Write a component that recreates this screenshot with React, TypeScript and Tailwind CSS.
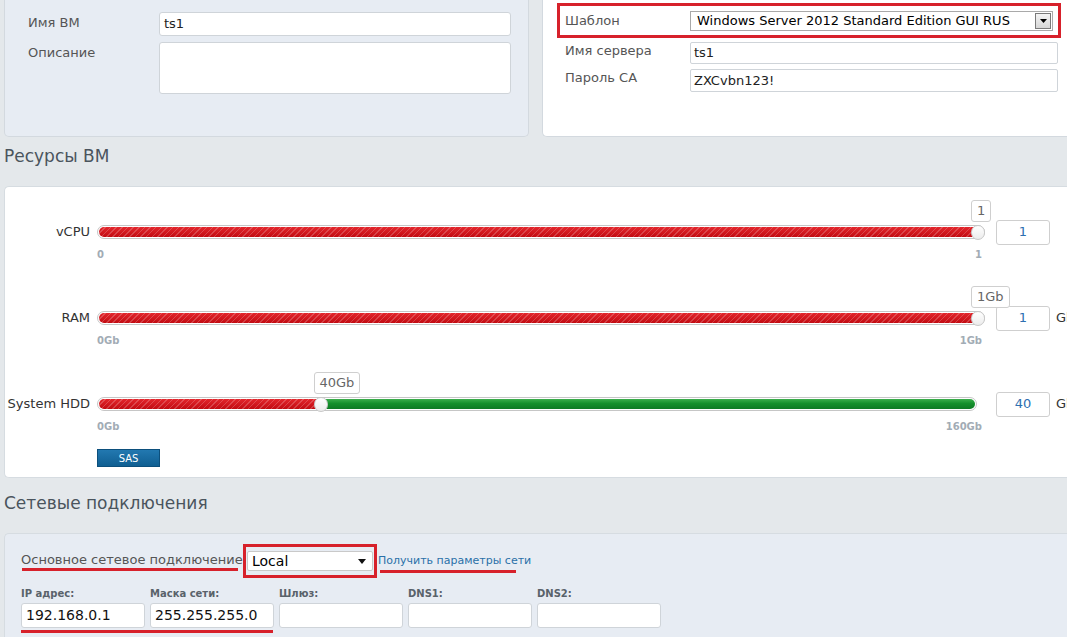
import React from "react";

const font = "font-['DejaVu_Sans','Liberation_Sans',sans-serif]";

type SliderRow = {
  label: string;
  min: string;
  max: string;
  tip: string;
  value: string;
  pct: number;
  trackW: number;
  trackCls: string;
  unit?: boolean;
  rest?: boolean;
};

const rows: SliderRow[] = [
  { label: "vCPU", min: "0", max: "1", tip: "1", value: "1", pct: 1, trackW: 888, trackCls: "w-[888px]" },
  { label: "RAM", min: "0Gb", max: "1Gb", tip: "1Gb", value: "1", pct: 1, trackW: 888, trackCls: "w-[888px]", unit: true },
  { label: "System HDD", min: "0Gb", max: "160Gb", tip: "40Gb", value: "40", pct: 0.25, trackW: 880, trackCls: "w-[880px]", unit: true, rest: true },
];

const netFields = [
  { label: "IP адрес:", value: "192.168.0.1" },
  { label: "Маска сети:", value: "255.255.255.0" },
  { label: "Шлюз:", value: "" },
  { label: "DNS1:", value: "" },
  { label: "DNS2:", value: "" },
];

function Slider({ r }: { r: SliderRow }) {
  const left = r.pct * (r.trackW - 14);
  return (
    <div>
      <div className="flex h-[14px] items-center">
        <div className="w-[85px] shrink-0 text-right text-[13px] leading-4 text-[#333]">{r.label}</div>
        <div className="ml-[7px] w-[888px] shrink-0">
          <div className={`relative flex h-[14px] rounded-full border border-[#c6c6c6] bg-white p-px ${r.trackCls}`}>
            <div
              className="h-full rounded-l-full [background-image:repeating-linear-gradient(135deg,rgba(255,255,255,0.2)_0px,rgba(255,255,255,0.2)_1px,transparent_1px,transparent_4px),linear-gradient(to_bottom,#e3262c,#c20b12)]"
              style={{ width: left + 7 }}
            />
            {r.rest && (
              <div className="h-full flex-1 rounded-r-full bg-[linear-gradient(to_bottom,#3cae4c,#15902c_45%,#0e7a24)]" />
            )}
            <div
              className="absolute top-[-1px] h-[15px] w-[14px] rounded-full border border-[#c8c8c8] bg-[linear-gradient(to_bottom,#ffffff,#ececec)]"
              style={{ left: left - 1 }}
            />
            <div
              className="absolute bottom-[16px] h-[22px] whitespace-nowrap rounded-[3px] border border-[#cfcfcf] bg-white px-[5px] text-[13px] leading-[20px] text-[#666]"
              style={{ left: left - 1 }}
            >
              {r.tip}
            </div>
          </div>
        </div>
        <div className="ml-[11px] flex h-[25px] w-[54px] shrink-0 items-center justify-center rounded-[3px] border border-[#cfcfcf] bg-white text-[13px] text-[#2d6fb0]">
          {r.value}
        </div>
        {r.unit && <span className="ml-[6px] text-[13px] text-[#333]">Gb</span>}
      </div>
      <div className="ml-[92px] mt-[10px] flex w-[888px] justify-between pr-[3px] text-[10px] font-bold leading-3 text-[#a2acb5]">
        <span>{r.min}</span>
        <span>{r.max}</span>
      </div>
    </div>
  );
}

export default function App() {
  return (
    <div className={`h-[637px] w-full overflow-hidden bg-[#e4e8eb] ${font}`}>
      <div className="w-[1100px] pl-1">
        {/* top panels */}
        <div className="flex h-[137px]">
          <div className="w-[525px] rounded-b-[5px] border border-t-0 border-[#d3d9df] bg-[#e7ecf3] pl-[23px] pt-[12px]">
            <div className="flex items-start">
              <div className="w-[131px] text-[13px] leading-[22px] text-[#555]">Имя ВМ</div>
              <div className="flex h-[24px] w-[352px] items-center rounded-[3px] border border-[#cfd4d9] bg-white pl-[4px] text-[13px] text-[#222]">
                ts1
              </div>
            </div>
            <div className="mt-[6px] flex items-start">
              <div className="w-[131px] pt-[1px] text-[13px] leading-[20px] text-[#555]">Описание</div>
              <div className="h-[52px] w-[352px] rounded-[3px] border border-[#cfd4d9] bg-white" />
            </div>
          </div>
          <div className="ml-[13px] flex-1 rounded-bl-[5px] border border-r-0 border-t-0 border-[#d3d9df] bg-white pl-[14px] pt-[3px]">
            <div className="flex h-[35px] w-[504px] items-start border-[3px] border-[#d7212b] pl-[5px] pt-[5px]">
              <div className="w-[125px] text-[13px] leading-[20px] text-[#555]">Шаблон</div>
              <div className="relative flex h-[20px] w-[363px] items-center border border-[#a9a9a9] bg-white pl-[6px] text-[13px] text-black">
                Windows Server 2012 Standard Edition GUI RUS
                <div className="absolute right-px top-px flex h-[16px] w-[16px] items-center justify-center border border-[#7a7a7a] bg-[linear-gradient(to_bottom,#f4f4f4,#d6d6d6)]">
                  <svg width="7" height="4" viewBox="0 0 7 4">
                    <path d="M0 0h7L3.5 4z" fill="#000" />
                  </svg>
                </div>
              </div>
            </div>
            <div className="mt-[4px] flex items-start pl-[8px]">
              <div className="w-[125px] text-[13px] leading-[18px] text-[#555]">Имя сервера</div>
              <div className="flex h-[22px] w-[368px] items-center rounded-[2px] border border-[#cfd4d9] bg-white pl-[3px] text-[13px] text-[#222]">
                ts1
              </div>
            </div>
            <div className="mt-[5px] flex items-start pl-[8px]">
              <div className="w-[125px] text-[13px] leading-[18px] text-[#555]">Пароль СА</div>
              <div className="flex h-[23px] w-[368px] items-center rounded-[2px] border border-[#cfd4d9] bg-white pl-[3px] text-[13px] text-[#222]">
                ZXCvbn123!
              </div>
            </div>
          </div>
        </div>

        {/* resources */}
        <div className="mb-[18px] mt-[7px] text-[17px] leading-[24px] text-[#4a545d]">Ресурсы ВМ</div>
        <div className="rounded-l-[5px] border border-r-0 border-[#d6dce1] bg-white pb-[10px] pt-[38px]">
          <div className="flex flex-col gap-[50px]">
            {rows.map((r) => (
              <Slider key={r.label} r={r} />
            ))}
          </div>
          <div className="ml-[92px] mt-[16px] flex h-[18px] w-[63px] items-center justify-center border border-[#0c4f7c] bg-[linear-gradient(to_bottom,#2278b0,#105f92)] text-[10px] text-white">
            SAS
          </div>
        </div>

        {/* network */}
        <div className="mb-[18px] mt-[13px] text-[17px] leading-[24px] text-[#4a545d]">Сетевые подключения</div>
        <div className="h-[120px] rounded-tl-[5px] border border-r-0 border-[#d6dce1] bg-[#e7ecf3] pl-[16px] pt-[10px]">
          <div className="flex items-center">
            <div className="flex w-[222px] flex-col">
              <span className="whitespace-nowrap text-[13px] leading-4 text-[#555]">Основное сетевое подключение</span>
              <div className="ml-[1px] h-[3px] w-[216px] bg-[#d7212b]" />
            </div>
            <div className="border-[3px] border-[#d7212b] px-px py-[4px]">
              <div className="flex h-[20px] w-[126px] items-center justify-between rounded-[2px] border border-[#c9c9c9] bg-white pl-[4px] pr-[6px] text-[14px] text-black">
                Local
                <svg width="8" height="5" viewBox="0 0 8 5">
                  <path d="M0 0h8L4 5z" fill="#111" />
                </svg>
              </div>
            </div>
            <div className="ml-px flex flex-col pt-[4px]">
              <span className="whitespace-nowrap text-[11px] leading-[14px] text-[#2a70a8]">Получить параметры сети</span>
              <div className="ml-[2px] mt-[2px] h-[3px] w-[136px] bg-[#d7212b]" />
            </div>
          </div>
          <div className="mt-[9px] flex gap-[5px]">
            {netFields.map((f) => (
              <div key={f.label} className="flex w-[124px] flex-col">
                <span className="text-[10px] font-bold leading-[14px] text-[#59626a]">{f.label}</span>
                <div className="mt-[2px] flex h-[25px] items-center rounded-[3px] border border-[#cfd4d9] bg-white pl-[4px] text-[14px] text-[#111]">
                  {f.value}
                </div>
              </div>
            ))}
          </div>
          <div className="mt-[2px] h-[3px] w-[252px] bg-[#d7212b]" />
        </div>
      </div>
    </div>
  );
}
